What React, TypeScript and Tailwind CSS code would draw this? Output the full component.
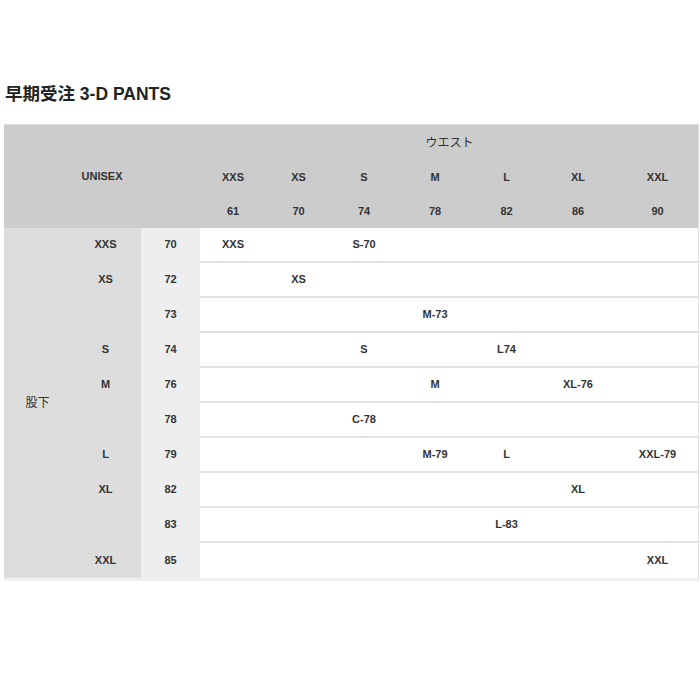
import React from "react";

const sizes = ["XXS", "XS", "S", "M", "L", "XL", "XXL"];
const waists = ["61", "70", "74", "78", "82", "86", "90"];

type Row = { size: string; len: string; cells: string[] };

const rows: Row[] = [
  { size: "XXS", len: "70", cells: ["XXS", "", "S-70", "", "", "", ""] },
  { size: "XS", len: "72", cells: ["", "XS", "", "", "", "", ""] },
  { size: "", len: "73", cells: ["", "", "", "M-73", "", "", ""] },
  { size: "S", len: "74", cells: ["", "", "S", "", "L74", "", ""] },
  { size: "M", len: "76", cells: ["", "", "", "M", "", "XL-76", ""] },
  { size: "", len: "78", cells: ["", "", "C-78", "", "", "", ""] },
  { size: "L", len: "79", cells: ["", "", "", "M-79", "L", "", "XXL-79"] },
  { size: "XL", len: "82", cells: ["", "", "", "", "", "XL", ""] },
  { size: "", len: "83", cells: ["", "", "", "", "L-83", "", ""] },
  { size: "XXL", len: "85", cells: ["", "", "", "", "", "", "XXL"] },
];

export default function App() {
  return (
    <div className="min-h-[700px] w-[700px] bg-white pt-[82px] text-[#333]" style={{ fontFamily: '"Liberation Sans", Arial, "Noto Sans CJK JP", sans-serif' }}>
      <h1 className="ml-[5px] text-[17.5px] font-bold leading-6 text-[#222]">早期受注 3-D PANTS</h1>
      <div className="ml-[4px] mt-[18px] w-[695px] border-t border-r border-[#dedede] border-b-[3px] border-b-[#f0f0f0]">
        <div className="grid grid-cols-[66px_71px_59px_66px_65px_66px_76px_67px_76px_83px] grid-rows-[35px_34px_34px] bg-[#cccccc] text-[11px] font-bold">
          <div className="col-span-3 row-span-3 flex items-center justify-center">UNISEX</div>
          <div className="col-span-7 flex items-center justify-center text-[12px] font-normal">ウエスト</div>
          {sizes.map((s) => (
            <div key={s} className="flex items-center justify-center">{s}</div>
          ))}
          {waists.map((w) => (
            <div key={w} className="flex items-center justify-center">{w}</div>
          ))}
        </div>
        <div className="grid grid-cols-[66px_71px_59px_66px_65px_66px_76px_67px_76px_83px] grid-rows-[repeat(10,35px)] text-[11px] font-bold">
          <div className="flex items-center justify-center bg-[#dddddd] pl-[1px] text-[12px] font-normal" style={{ gridRow: "1 / span 10", gridColumn: "1" }}>股下</div>
          {rows.map((r, i) => {
            const last = i === rows.length - 1;
            return (
              <React.Fragment key={i}>
                <div className={last ? "flex items-center justify-center bg-[#dddddd]" : "flex items-center justify-center bg-[#dddddd] pb-[2px]"} style={{ gridRow: i + 1, gridColumn: 2 }}>{r.size}</div>
                <div className={last ? "flex items-center justify-center bg-[#eeeeee]" : "flex items-center justify-center bg-[#eeeeee] pb-[2px]"} style={{ gridRow: i + 1, gridColumn: 3 }}>{r.len}</div>
                {r.cells.map((c, j) => (
                  <div
                    key={j}
                    className={last ? "flex items-center justify-center" : "flex items-center justify-center border-b-2 border-[#e2e2e2]"}
                    style={{ gridRow: i + 1, gridColumn: 4 + j }}
                  >
                    {c}
                  </div>
                ))}
              </React.Fragment>
            );
          })}
        </div>
      </div>
    </div>
  );
}
